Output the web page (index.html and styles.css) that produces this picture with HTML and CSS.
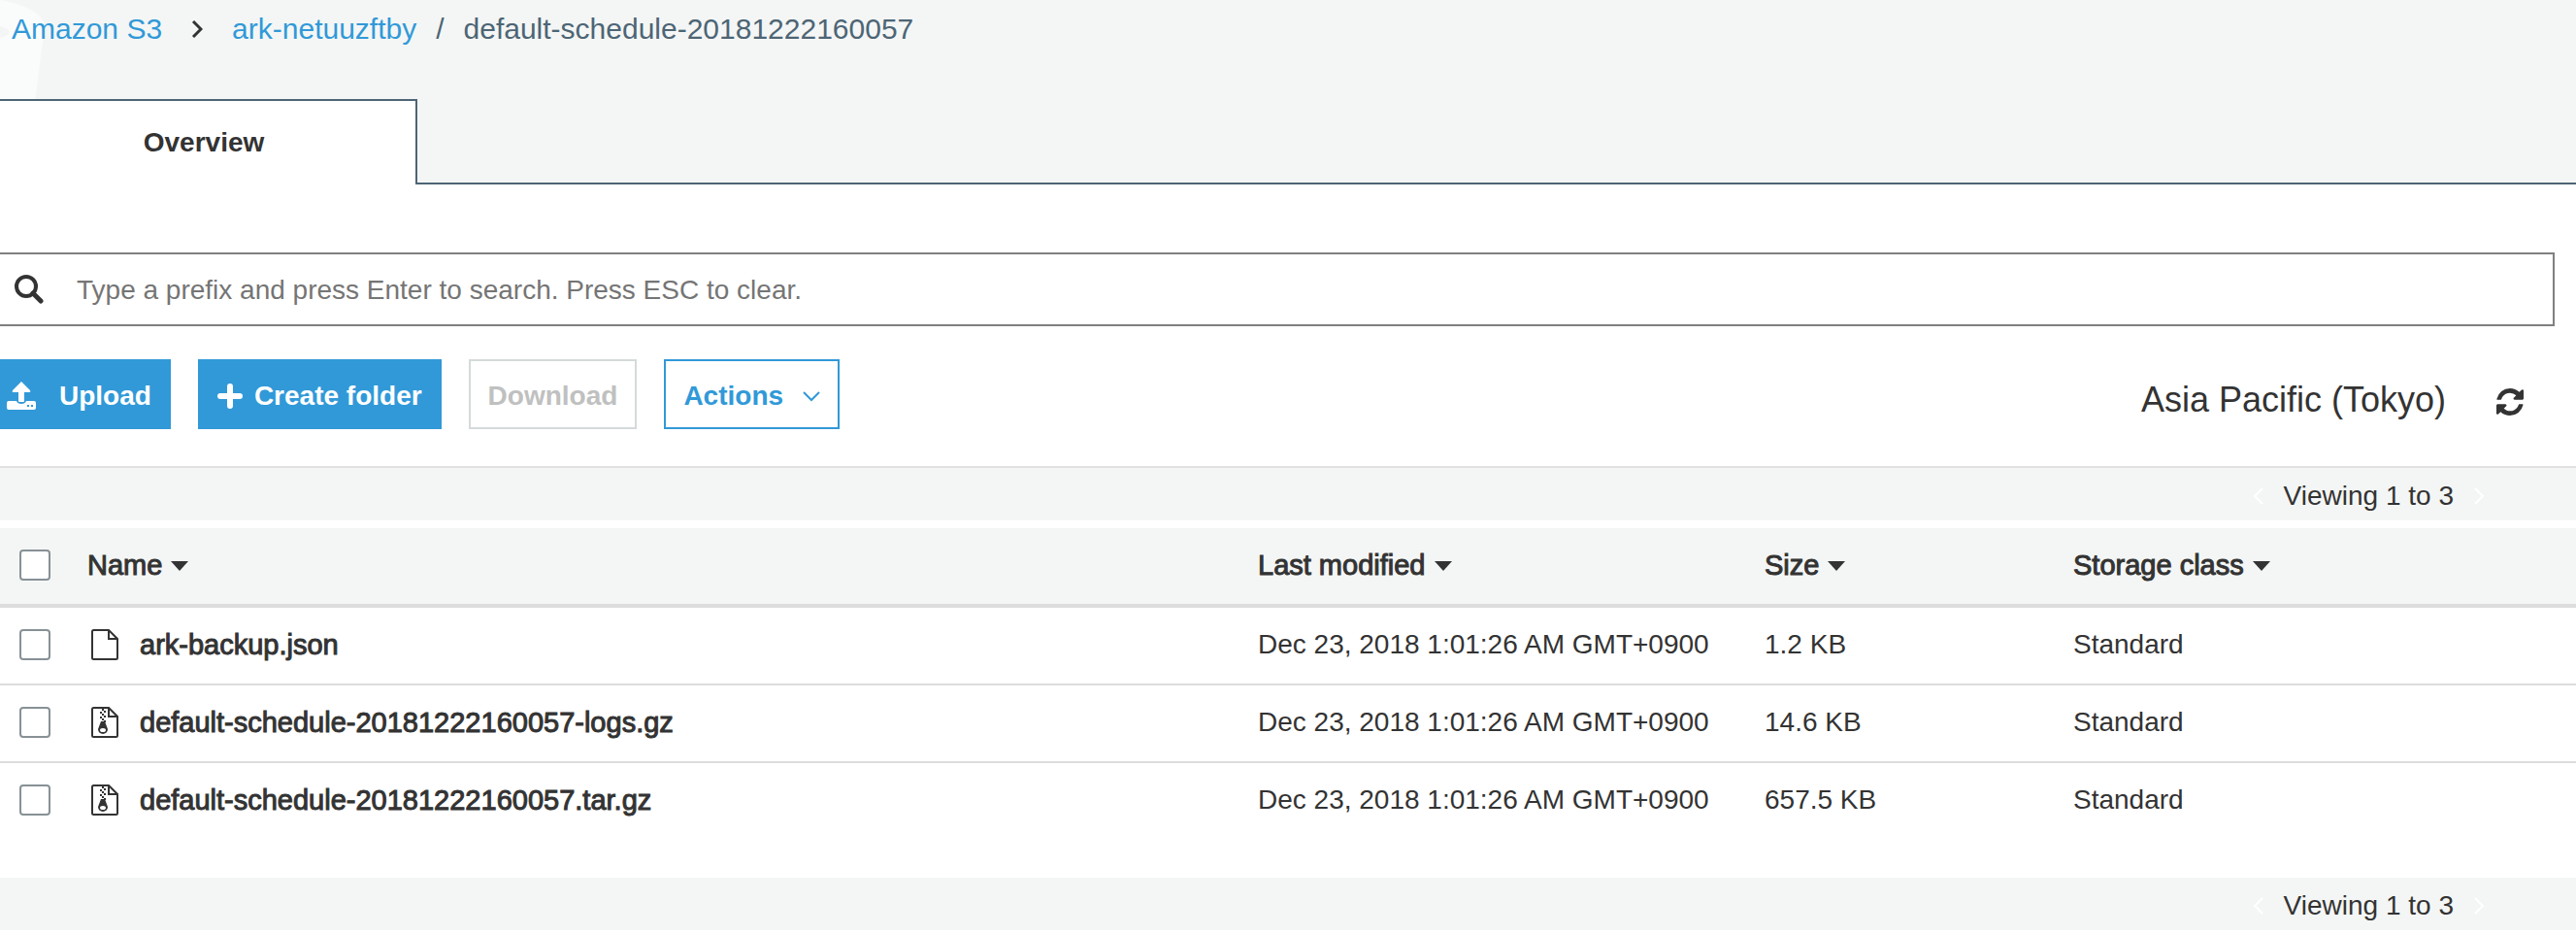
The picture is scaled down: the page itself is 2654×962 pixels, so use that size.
FILE: index.html
```html
<!DOCTYPE html>
<html lang="en">
<head>
    <meta charset="UTF-8">
    <meta name="viewport" content="width=device-width, initial-scale=1.0">
    <title>S3 Management Console</title>
    <link rel="stylesheet" href="styles.css">
</head>
<body>

    <!-- shared icons -->
    <svg class="sprite" aria-hidden="true">
        <symbol id="file" viewBox="0 0 28 32">
            <path d="M1 2.500Q1 1 2.500 1H18L27 10V29.500Q27 31 25.500 31H2.500Q1 31 1 29.500Z" fill="none" stroke="#333" stroke-width="2"/>
            <path d="M18 1V10H27" fill="none" stroke="#333" stroke-width="2"/>
        </symbol>
        <symbol id="zip" viewBox="0 0 28 32">
            <use href="#file"/>
            <path d="M11 2h2v2h-2zM13 4h2v2h-2zM9 5h2v2H9zM11 7h2v2h-2zM13 9h2v2h-2zM9 10h2v2H9zM11 12h2v2h-2zM13 14h2v2h-2z" fill="#333"/>
            <path d="M10 15h4l3 8a5 5 0 1 1-10 0z" fill="#333"/>
            <ellipse cx="12" cy="24" rx="3" ry="2" fill="#fff"/>
        </symbol>
        <symbol id="prev" viewBox="0 0 12 18">
            <path d="M10 1L2 9l8 8" fill="none" stroke="#fff" stroke-width="2"/>
        </symbol>
        <symbol id="next" viewBox="0 0 12 18">
            <path d="M2 1l8 8-8 8" fill="none" stroke="#fff" stroke-width="2"/>
        </symbol>
    </svg>

    <header class="header">
        <svg class="header-art" viewBox="0 0 48 104" aria-hidden="true">
            <path d="M0 0C24 4 46 14 46 28L36 104H0Z" fill="#fafcfb"/>
            <path d="M0 27Q10 30 10 33Q10 36 0 39Z" fill="#f4f6f5"/>
        </svg>
        <nav class="breadcrumb" aria-label="Breadcrumb">
            <a href="#">Amazon S3</a>
            <svg class="crumb-arrow" viewBox="0 0 12 18" aria-hidden="true"><path d="M2 1l8 8-8 8" fill="none" stroke="#333" stroke-width="3"/></svg>
            <a href="#">ark-netuuzftby</a>
            <span class="slash">/</span>
            <span>default-schedule-20181222160057</span>
        </nav>
        <div class="tabs">
            <button class="tab" type="button">Overview</button>
            <div class="tab-line"></div>
        </div>
    </header>

    <main>
        <div class="search">
            <svg class="search-icon" viewBox="0 0 30 30" aria-hidden="true">
                <circle cx="12" cy="12" r="10" fill="none" stroke="#333" stroke-width="4"/>
                <path d="M19 19l8 8" stroke="#333" stroke-width="5" stroke-linecap="round"/>
            </svg>
            <input type="text" aria-label="Search" placeholder="Type a prefix and press Enter to search. Press ESC to clear.">
        </div>

        <div class="toolbar">
            <button class="btn btn-primary btn-upload" type="button">
                <svg class="upload-icon" viewBox="0 0 30 30" aria-hidden="true">
                    <path d="M15 0l9 9q1 2-1 2h-5v9q0 1-1 1h-4q-1 0-1-1v-9H7q-2 0-1-2z" fill="#fff"/>
                    <path d="M2 20h8q1 3 5 3t5-3h8q2 0 2 2v5q0 2-2 2H2q-2 0-2-2v-5q0-2 2-2z" fill="#fff"/>
                    <path d="M21 24h2v2h-2zM25 24h2v2h-2z" fill="#3199d8"/>
                </svg>
                Upload
            </button>
            <button class="btn btn-primary" type="button">
                <svg class="plus-icon" viewBox="0 0 26 26" aria-hidden="true">
                    <path d="M13 3v20M3 13h20" stroke="#fff" stroke-width="6" stroke-linecap="round"/>
                </svg>
                Create folder
            </button>
            <button class="btn btn-disabled" type="button" disabled>Download</button>
            <button class="btn btn-outline" type="button">
                Actions
                <svg class="caret-icon" viewBox="0 0 18 11" aria-hidden="true"><path d="M1 1l8 8 8-8" fill="none" stroke="#3199d8" stroke-width="2"/></svg>
            </button>
            <span class="region">Asia Pacific (Tokyo)</span>
            <button class="refresh" type="button" aria-label="Refresh">
                <svg viewBox="0 0 1536 1536" aria-hidden="true">
                    <path fill="#333" d="M1511 928q0 5-1 7-64 268-268 434.500T764 1536q-146 0-282.500-55T238 1324l-129 129q-19 19-45 19t-45-19-19-45V960q0-26 19-45t45-19h448q26 0 45 19t19 45-19 45l-137 137q71 66 161 102t187 36q134 0 250-65t186-179q11-17 53-117 8-23 30-23h192q13 0 22.500 9.500t9.500 22.500zm25-800v448q0 26-19 45t-45 19h-448q-26 0-45-19t-19-45 19-45l138-138Q969 256 768 256q-134 0-250 65T332 500q-11 17-53 117-8 23-30 23H50q-13 0-22.500-9.500T18 608v-7q65-268 270-434.500T768 0q146 0 284 55.500T1297 212l130-129q19-19 45-19t45 19 19 45z"/>
                </svg>
            </button>
        </div>

        <div class="pager pager-top">
            <svg><use href="#prev"/></svg>
            <span>Viewing 1 to 3</span>
            <svg><use href="#next"/></svg>
        </div>

        <table class="objects">
            <colgroup>
                <col class="col-check">
                <col>
                <col class="col-date">
                <col class="col-size">
                <col class="col-class">
            </colgroup>
            <thead>
                <tr>
                    <th><input type="checkbox" aria-label="Select all"></th>
                    <th>Name<i class="sort"></i></th>
                    <th>Last modified<i class="sort"></i></th>
                    <th>Size<i class="sort"></i></th>
                    <th>Storage class<i class="sort"></i></th>
                </tr>
            </thead>
            <tbody>
                <tr>
                    <td><input type="checkbox" aria-label="ark-backup.json"></td>
                    <td><div class="name"><svg><use href="#file"/></svg>ark-backup.json</div></td>
                    <td>Dec 23, 2018 1:01:26 AM GMT+0900</td>
                    <td>1.2 KB</td>
                    <td>Standard</td>
                </tr>
                <tr>
                    <td><input type="checkbox" aria-label="default-schedule-20181222160057-logs.gz"></td>
                    <td><div class="name"><svg><use href="#zip"/></svg>default-schedule-20181222160057-logs.gz</div></td>
                    <td>Dec 23, 2018 1:01:26 AM GMT+0900</td>
                    <td>14.6 KB</td>
                    <td>Standard</td>
                </tr>
                <tr>
                    <td><input type="checkbox" aria-label="default-schedule-20181222160057.tar.gz"></td>
                    <td><div class="name"><svg><use href="#zip"/></svg>default-schedule-20181222160057.tar.gz</div></td>
                    <td>Dec 23, 2018 1:01:26 AM GMT+0900</td>
                    <td>657.5 KB</td>
                    <td>Standard</td>
                </tr>
            </tbody>
        </table>

        <div class="pager pager-bottom">
            <svg><use href="#prev"/></svg>
            <span>Viewing 1 to 3</span>
            <svg><use href="#next"/></svg>
        </div>
    </main>

</body>
</html>
```
FILE: styles.css
```css
* {
    box-sizing: border-box;
}

body {
    margin: 0;
    font-family: "Liberation Sans", Arial, sans-serif;
    font-size: 28px;
    line-height: 32px;
    color: #333;
    background-color: #fff;
}

button, input {
    font: inherit;
    color: inherit;
}

svg {
    display: block;
    flex: none;
}

.sprite {
    display: none;
}

/* header */
.header {
    position: relative;
    background-color: #f4f6f5;
}

.header-art {
    position: absolute;
    left: 0;
    top: 0;
    width: 48px;
    height: 104px;
}

.breadcrumb {
    position: relative;
    display: flex;
    align-items: center;
    height: 102px;
    padding: 0 12px 42px;
    font-size: 30px;
    color: #4d6575;
}

.breadcrumb a {
    color: #3199d8;
    text-decoration: none;
}

.crumb-arrow {
    width: 12px;
    height: 18px;
    margin: 0 30px;
}

.slash {
    margin: 0 20px;
}

.tabs {
    position: relative;
    display: flex;
    height: 88px;
}

.tab {
    width: 430px;
    padding: 0 8px 0 0;
    border: solid #4d6575;
    border-width: 2px 2px 0 0;
    background-color: #fff;
    font-weight: bold;
}

.tab-line {
    flex: 1;
    border-bottom: 2px solid #4d6575;
}

/* search */
.search {
    display: flex;
    align-items: center;
    height: 76px;
    margin: 70px 22px 34px 0;
    padding-left: 15px;
    border: 2px solid #808080;
    border-left: 0;
}

.search-icon {
    width: 30px;
    height: 30px;
}

.search input {
    flex: 1;
    padding: 2px 0 0 34px;
    border: 0;
    outline: 0;
    background: none;
}

.search input::placeholder {
    color: #757575;
    opacity: 1;
}

/* toolbar */
.toolbar {
    display: flex;
    align-items: center;
    gap: 28px;
    padding-bottom: 38px;
}

.btn {
    display: flex;
    align-items: center;
    height: 72px;
    padding: 4px 18px 0;
    border: 2px solid #3199d8;
    font-weight: bold;
}

.btn-primary {
    background-color: #3199d8;
    color: #fff;
}

.btn-upload {
    padding-left: 5px;
}

.btn-disabled {
    border-color: #d5dadb;
    background-color: #fff;
    color: #bfc0c0;
}

.btn-outline {
    background-color: #fff;
    color: #3199d8;
}

.upload-icon {
    width: 30px;
    height: 30px;
    margin-right: 24px;
}

.plus-icon {
    width: 26px;
    height: 26px;
    margin-right: 12px;
}

.caret-icon {
    width: 18px;
    height: 11px;
    margin-left: 20px;
}

.region {
    margin-left: auto;
    padding-top: 12px;
    font-size: 36px;
}

.refresh {
    padding: 16px 54px 0 24px;
    border: 0;
    background: none;
}

.refresh svg {
    width: 28px;
    height: 28px;
}

/* pager */
.pager {
    display: flex;
    justify-content: flex-end;
    align-items: center;
    gap: 20px;
    height: 54px;
    padding: 4px 94px 0 0;
    background-color: #f4f6f5;
}

.pager svg {
    width: 12px;
    height: 18px;
}

.pager-top {
    height: 56px;
    margin-bottom: 8px;
    border-top: 2px solid #e1e1e1;
}

.pager-bottom {
    margin: 38px 0 4px;
}

/* object list */
.objects {
    width: 100%;
    table-layout: fixed;
    border-collapse: separate;
    border-spacing: 0;
}

.col-check {
    width: 90px;
}

.col-date {
    width: 522px;
}

.col-size {
    width: 318px;
}

.col-class {
    width: 518px;
}

.objects th,
.objects td {
    height: 80px;
    padding: 0 0 2px;
    border-bottom: 2px solid #ddd;
    text-align: left;
}

.objects th {
    height: 82px;
    border-bottom-width: 4px;
    background-color: #f4f6f5;
}

.objects tr:last-child td {
    border-bottom-color: #fff;
}

.objects thead tr:last-child th {
    border-bottom-color: #ddd;
}

/* medium weight: regular face with a thin outline */
.objects th,
.name {
    font-size: 29px;
    font-weight: normal;
    -webkit-text-stroke: 1px #333;
}

.objects input {
    display: block;
    appearance: none;
    width: 32px;
    height: 32px;
    margin: 0 0 0 20px;
    border: 2px solid #879196;
    border-radius: 4px;
    background-color: #fff;
}

.sort {
    display: inline-block;
    margin-left: 9px;
    border: solid transparent;
    border-width: 10px 9px 0;
    border-top-color: #333;
    vertical-align: 4px;
}

.name {
    display: flex;
    align-items: center;
}

.name svg {
    width: 28px;
    height: 32px;
    margin: 0 22px 0 4px;
}
```
